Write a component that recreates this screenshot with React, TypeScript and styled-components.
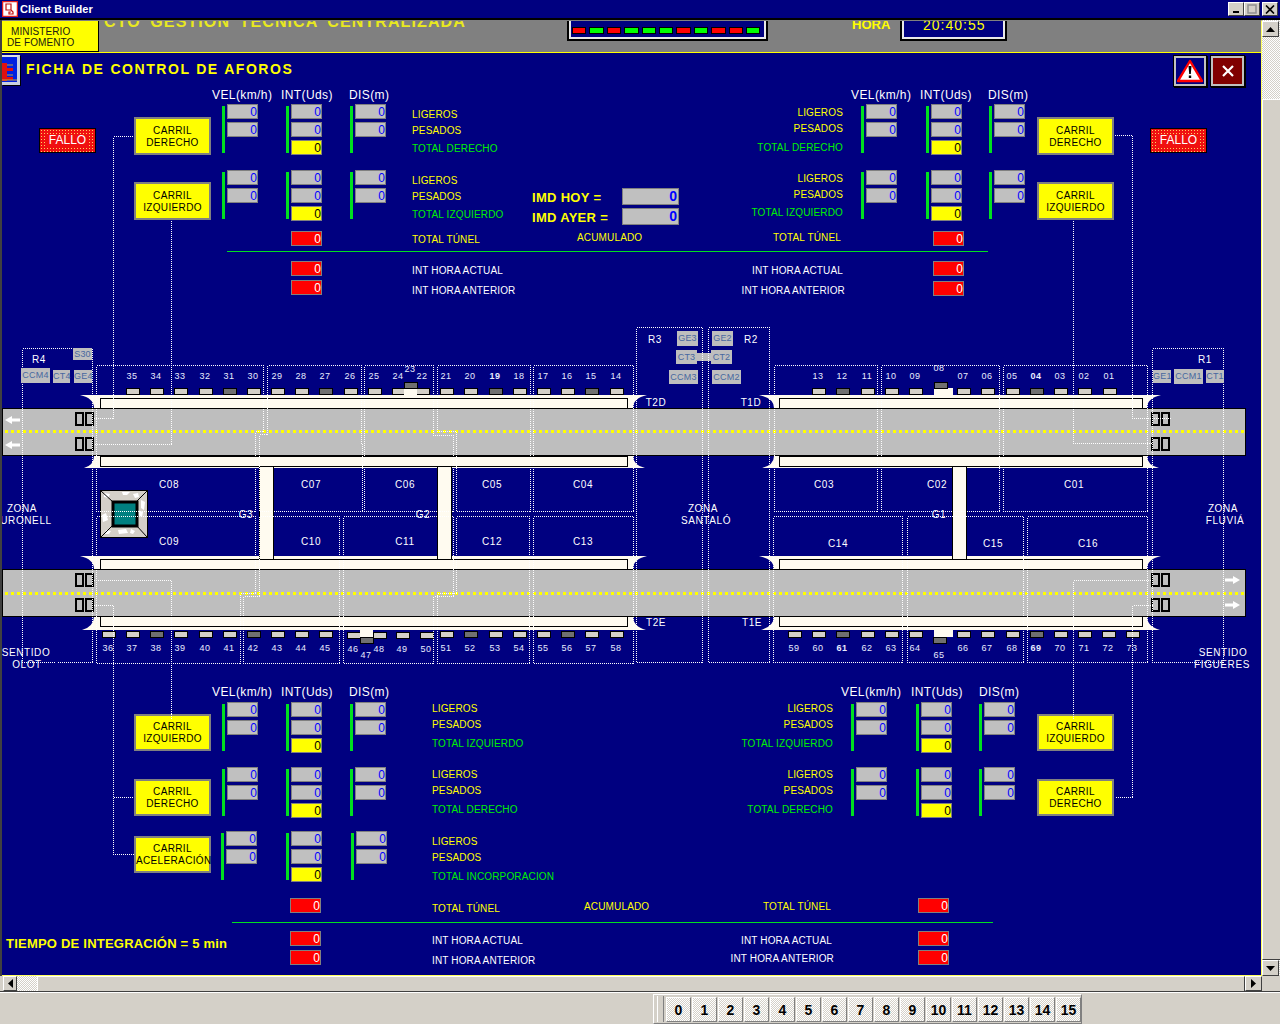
import React from 'react';
import styled, { createGlobalStyle, css } from 'styled-components';

// the synoptic is a free canvas: everything inside it uses page coordinates
const OX = 2;
const OY = 53;

type Pos = { $x: number; $y: number };

const at = css<Pos>`
  position: absolute;
  left: ${(p) => p.$x - OX}px;
  top: ${(p) => p.$y - OY}px;
`;

const NAVY = '#000080';
const FACE = '#d4d0c8';
const CREAM = '#fffbf0';
const GREEN = '#00f000';
const dither = css`
  background-color: ${FACE};
  background-image: conic-gradient(#ffffff 25%, ${FACE} 0 50%, #ffffff 0 75%, ${FACE} 0);
  background-size: 2px 2px;
`;

const GlobalStyle = createGlobalStyle`
  html, body { margin: 0; padding: 0; background: ${FACE}; }
  body { font-family: "Liberation Sans", Arial, sans-serif; overflow: hidden; }
`;

const Shell = styled.div`
  width: 1280px;
  height: 1024px;
  display: flex;
  flex-direction: column;
  background: ${FACE};
  overflow: hidden;
`;

// TITLE BAR
const TitleBar = styled.div`
  height: 18px;
  border-bottom: 2px solid #000000;
  background: ${NAVY};
  display: flex;
  align-items: center;
  padding-left: 2px;
  flex: none;
`;
const TitleText = styled.span`
  margin-left: 2px;
  color: #ffffff;
  font-size: 11px;
  font-weight: bold;
  letter-spacing: 0.1px;
`;
const WindowButtons = styled.div`
  margin-left: auto;
  display: flex;
  padding-right: 2px;
`;
const WindowButton = styled.div<{ $gap?: number }>`
  width: 16px;
  height: 14px;
  margin-left: ${(p) => p.$gap ?? 0}px;
  background: ${FACE};
  border-top: 1px solid #ffffff;
  border-left: 1px solid #ffffff;
  border-right: 1px solid #404040;
  border-bottom: 1px solid #404040;
  box-sizing: border-box;
  display: flex;
  align-items: center;
  justify-content: center;
`;

// WINDOW BODY
const WindowRow = styled.div`
  height: 956px;
  display: flex;
  flex: none;
  border-left: 2px solid #404040;
`;
const Content = styled.div`
  width: 1259px;
  display: flex;
  flex-direction: column;
  border-top: 1px solid #808080;
  border-right: 1px solid #ffff60;
  border-bottom: 1px solid #ffff60;
`;
const Band = styled.div`
  height: 31px;
  flex: none;
  background: #808080;
  border-bottom: 1px solid #ffff00;
  display: flex;
  overflow: hidden;
`;
const Ministry = styled.div`
  width: 97px;
  flex: none;
  background: #ffff00;
  border-right: 1px solid #000000;
  border-bottom: 1px solid #000000;
  color: #202010;
  font-size: 10px;
  line-height: 11px;
  padding: 5px 0 0 5px;
  letter-spacing: 0.1px;
  box-sizing: border-box;
  span { display: block; }
  span:first-child { padding-left: 4px; }
`;
const BandTitle = styled.div`
  flex: 0 0 468px;
  margin-top: -7px;
  padding-left: 5px;
  box-sizing: border-box;
  color: #e8e820;
  font-size: 16px;
  font-weight: bold;
  line-height: 16px;
  letter-spacing: 1.1px;
  word-spacing: 4px;
  white-space: nowrap;
  overflow: hidden;
`;
const Inset = styled.div<{ $w: number }>`
  width: ${(p) => p.$w}px;
  height: 20px;
  flex: none;
  box-sizing: border-box;
  background: ${NAVY};
  border: 2px solid #000000;
  border-top: 0;
  box-shadow: inset 2px -2px 0 #e8e8e8, inset -2px 0 0 #e8e8e8;
`;
const LedRow = styled.div`
  display: flex;
  gap: 3px;
  padding: 6px 0 0 3px;
`;
const Led = styled.i<{ $on: boolean }>`
  display: block;
  width: 14.4px;
  height: 7px;
  border: 1px solid #000000;
  box-sizing: border-box;
  background: ${(p) => (p.$on ? '#00ff00' : '#ff0000')};
`;
const HoraLabel = styled.div`
  width: 48px;
  margin-left: 84px;
  margin-top: -3px;
  flex: none;
  color: #ffff00;
  font-size: 13px;
  font-weight: bold;
  line-height: 14px;
`;
const ClockText = styled.div`
  margin-top: -3px;
  padding-left: 21px;
  color: #ffff00;
  font-size: 14px;
  line-height: 15px;
  letter-spacing: 1px;
`;

const Canvas = styled.div`
  position: relative;
  flex: 1;
  background: ${NAVY};
  overflow: hidden;
`;
const Diagram = styled.svg`
  position: absolute;
  left: 0;
  top: 0;
`;

// CANVAS PARTS
const Heading = styled.div<Pos>`
  ${at};
  color: #ffff00;
  font-size: 14px;
  font-weight: bold;
  line-height: 16px;
  letter-spacing: 1.55px;
  word-spacing: 0.5px;
  white-space: nowrap;
`;
const anchors = { start: 'none', middle: 'translateX(-50%)', end: 'translateX(-100%)' };
const Label = styled.span<Pos & { $tone?: string; $anchor?: keyof typeof anchors; $size?: number; $bold?: boolean; $track?: number }>`
  ${at};
  color: ${(p) => p.$tone ?? '#ffff00'};
  font-size: ${(p) => p.$size ?? 10}px;
  font-weight: ${(p) => (p.$bold ? 'bold' : 'normal')};
  letter-spacing: ${(p) => p.$track ?? 0.15}px;
  line-height: 12px;
  margin-top: -5px;
  white-space: nowrap;
  transform: ${(p) => anchors[p.$anchor ?? 'start']};
`;
const Lane = styled.div<Pos & { $h: number }>`
  ${at};
  width: 77px;
  height: ${(p) => p.$h}px;
  box-sizing: border-box;
  background: #ffff00;
  border: 2px solid #808080;
  color: #000000;
  font-size: 10px;
  line-height: 12px;
  letter-spacing: 0.35px;
  text-align: center;
  display: flex;
  flex-direction: column;
  justify-content: center;
  padding-top: 1px;
  white-space: nowrap;
`;
const Fallo = styled.div<Pos>`
  ${at};
  width: 57px;
  height: 25px;
  box-sizing: border-box;
  background:
    linear-gradient(#f01010, #f01010) center / 42px 13px no-repeat,
    radial-gradient(circle, #ffd060 0.7px, #f01010 0.9px) 0 0 / 3px 3px;
  border: 1px solid #000000;
  color: #ffffff;
  font-size: 12px;
  line-height: 23px;
  text-align: center;
`;
const GaugeGroup = styled.div<Pos>`
  ${at};
  display: flex;
  gap: 2px;
`;
const GaugeBar = styled.i`
  display: block;
  width: 3px;
  height: 47px;
  margin-top: 2px;
  background: #00e020;
`;
const GaugeStack = styled.div`
  display: flex;
  flex-direction: column;
  gap: 3px;
`;
const tones = {
  gray: { bg: '#c0c0c0', fg: '#0000ff' },
  yellow: { bg: '#ffff00', fg: '#000000' },
  red: { bg: '#ff0000', fg: '#ffffff' },
};
const Readout = styled.div<{ $tone?: keyof typeof tones }>`
  width: 31px;
  height: 15px;
  box-sizing: border-box;
  border: 1px solid #808080;
  background: ${(p) => tones[p.$tone ?? 'gray'].bg};
  color: ${(p) => tones[p.$tone ?? 'gray'].fg};
  font-size: 12px;
  line-height: 14px;
  text-align: right;
`;
const PlacedReadout = styled(Readout)<Pos>`
  ${at};
`;
const ImdBox = styled.div<Pos>`
  ${at};
  width: 57px;
  height: 17px;
  box-sizing: border-box;
  background: #c0c0c0;
  border: 1px solid #808080;
  color: #0000ff;
  font-size: 14px;
  font-weight: bold;
  line-height: 15px;
  text-align: right;
  padding-right: 1px;
`;
const Tag = styled.div<Pos & { $w: number; $h: number }>`
  ${at};
  width: ${(p) => p.$w}px;
  height: ${(p) => p.$h}px;
  background: #bebebe;
  color: #4868a0;
  font-size: 9px;
  line-height: ${(p) => p.$h}px;
  letter-spacing: 0.2px;
  text-align: center;
`;
const IconTile = styled.div<Pos & { $w: number; $h: number; $fill: string }>`
  ${at};
  width: ${(p) => p.$w}px;
  height: ${(p) => p.$h}px;
  box-sizing: border-box;
  background: ${(p) => p.$fill};
  border: 3px solid #c0c0c0;
  outline: 1px solid #000000;
  outline-offset: -1px;
  box-shadow: 1px 1px 0 #000000;
  display: flex;
  align-items: center;
  justify-content: center;
`;
const PageIcon = styled.div<Pos>`
  ${at};
  width: 18px;
  height: 30px;
  box-sizing: border-box;
  background: #0020e0;
  border-top: 2px solid #e0e0e0;
  border-right: 3px solid #c8d0e0;
  border-bottom: 3px solid #c8d0e0;
  box-shadow: 1px 1px 0 #000000;
  display: flex;
`;

// SCROLLBARS AND TOOL STRIP
const VScroll = styled.div`
  flex: 1;
  display: flex;
  flex-direction: column;
  padding-top: 1px;
  ${dither};
`;
const ArrowButton = styled.div<{ $w?: number; $h?: number }>`
  width: ${(p) => p.$w ?? 17}px;
  height: ${(p) => p.$h ?? 16}px;
  flex: none;
  box-sizing: border-box;
  background: ${FACE};
  border-top: 1px solid #ffffff;
  border-left: 1px solid #ffffff;
  border-right: 1px solid #404040;
  border-bottom: 1px solid #404040;
  display: flex;
  align-items: center;
  justify-content: center;
`;
const VThumb = styled.div`
  margin-top: 62px;
  flex: 1;
  background: ${FACE};
  border-top: 1px solid #ffffff;
  border-left: 1px solid #ffffff;
  border-bottom: 1px solid #404040;
`;
const HScroll = styled.div`
  height: 15px;
  flex: none;
  margin-left: 3px;
  width: 1259px;
  display: flex;
  ${dither};
`;
const HThumb = styled.div`
  margin-left: 20px;
  flex: 1;
  background: ${FACE};
  border-top: 1px solid #ffffff;
  border-left: 1px solid #ffffff;
  border-right: 1px solid #404040;
`;
const StatusBar = styled.div`
  flex: 1;
  border-top: 1px solid #404040;
  box-shadow: inset 0 1px 0 #ffffff;
  padding: 2px 0 0 653px;
`;
const ToolStrip = styled.div`
  width: 429px;
  height: 30px;
  box-sizing: border-box;
  display: flex;
  align-items: center;
  gap: 1px;
  padding-left: 3px;
  border-top: 1px solid #ffffff;
  border-left: 1px solid #ffffff;
  border-right: 1px solid #808080;
  border-bottom: 1px solid #808080;
`;
const Grip = styled.i`
  display: block;
  width: 5px;
  height: 26px;
  margin-right: 1px;
  background: ${FACE};
  border-left: 1px solid #ffffff;
  border-right: 1px solid #808080;
`;
const ToolButton = styled.div`
  width: 25px;
  height: 25px;
  box-sizing: border-box;
  ${dither};
  border-top: 1px solid #ffffff;
  border-left: 1px solid #ffffff;
  border-right: 1px solid #808080;
  border-bottom: 1px solid #808080;
  color: #000000;
  font-size: 14px;
  font-weight: bold;
  line-height: 25px;
  text-align: center;
`;

// DATA
const topSensors: [string, number][] = [
  ['35', 132], ['34', 156], ['33', 180], ['32', 205], ['31', 229], ['30', 253], ['29', 277], ['28', 301], ['27', 325], ['26', 350],
  ['25', 374], ['24', 398], ['22', 422], ['21', 446], ['20', 470], ['19', 495], ['18', 519], ['17', 543], ['16', 567], ['15', 591], ['14', 616],
  ['13', 818], ['12', 842], ['11', 867], ['10', 891], ['09', 915], ['07', 963], ['06', 987], ['05', 1012], ['04', 1036], ['03', 1060], ['02', 1084], ['01', 1109],
];
const bottomSensors: [string, number][] = [
  ['36', 108], ['37', 132], ['38', 156], ['39', 180], ['40', 205], ['41', 229], ['42', 253], ['43', 277], ['44', 301], ['45', 325],
  ['51', 446], ['52', 470], ['53', 495], ['54', 519], ['55', 543], ['56', 567], ['57', 591], ['58', 616],
  ['59', 794], ['60', 818], ['61', 842], ['62', 867], ['63', 891], ['64', 915], ['66', 963], ['67', 987], ['68', 1012], ['69', 1036], ['70', 1060], ['71', 1084], ['72', 1108], ['73', 1132],
];
const shiftedSensors: [string, number][] = [['46', 353], ['48', 379], ['49', 402], ['50', 426]];
const darkSensors = ['31', '27', '19', '15', '12', '04', '38', '42', '52', '56', '61', '69'];
const boldSensors = ['19', '04', '61', '69'];

const zones = [
  'M22,348H92V662H22Z',
  'M96,365H263V431H255V511H96Z',
  'M267,365V434H259V511H362V443H361V365Z',
  'M364,365H433V435H453V511H364Z',
  'M437,365H530V511H456V431H437Z',
  'M533,365H633V511H533Z',
  'M96,516H255V593H240V663H96Z',
  'M259,516V596H243V663H339V516Z',
  'M343,516H453V596H433V663H343Z',
  'M456,516H529V663H437V593H456Z',
  'M533,516H633V663H533Z',
  'M636,327H702V662H636Z',
  'M708,327H769V662H708Z',
  'M774,365H877V511H774Z',
  'M881,365H999V511H881Z',
  'M1003,365H1147V511H1003Z',
  'M773,516H902V662H773Z',
  'M907,516H1023V662H907Z',
  'M1027,516H1147V662H1027Z',
  'M1152,348H1223V662H1152Z',
  'M134,136H113V418H93',
  'M171,220V444H93',
  'M1114,135H1132V418H1170',
  'M1073,220V443H1152',
  'M93,580H171V720',
  'M93,605H113V854H134',
  'M113,797H134',
  'M1152,580H1073V720',
  'M1152,605H1132V797H1114',
];

const walls = [
  [100, 627, 395, 398, 408, 80, 647, 94, 633],
  [100, 627, 468, 466, 456, 84, 645, 94, 633],
  [100, 627, 556, 559, 569, 80, 647, 94, 633],
  [100, 627, 630, 626, 616, 82, 646, 94, 633],
  [779, 1142, 395, 398, 408, 759, 1161, 774, 1147],
  [779, 1142, 468, 466, 456, 762, 1159, 774, 1147],
  [779, 1142, 556, 559, 569, 759, 1161, 774, 1147],
  [779, 1142, 630, 626, 616, 761, 1160, 774, 1147],
];

const blotches = [
  'M104,493l6,1-2,4-4,-1Z', 'M122,492l8,0-3,3-4,0Z', 'M133,494l5,-1 1,4-4,1Z', 'M141,500l4,2-1,8-3,-2Z',
  'M137,510l6,2-1,5-4,-2Z', 'M102,515l4,-2 2,7-5,2Z', 'M118,530l8,-1 2,4-9,1Z', 'M131,529l4,2-2,3-3,-1Z', 'M106,530l5,1-2,3-4,0Z',
];

const Gauge = ({ x, y, total }: { x: number; y: number; total?: boolean }) => (
  <GaugeGroup $x={x} $y={y}>
    <GaugeBar />
    <GaugeStack>
      <Readout>0</Readout>
      <Readout>0</Readout>
      {total && <Readout $tone="yellow">0</Readout>}
    </GaugeStack>
  </GaugeGroup>
);

const GaugeTrio = ({ xs, y }: { xs: number[]; y: number }) => (
  <>
    <Gauge x={xs[0]} y={y} />
    <Gauge x={xs[1]} y={y} total />
    <Gauge x={xs[2]} y={y} />
  </>
);

const Headers = ({ xs, y }: { xs: number[]; y: number }) => (
  <>
    <Label $x={xs[0]} $y={y} $tone="#ffffff" $size={12} $track={0.4}>VEL(km/h)</Label>
    <Label $x={xs[1]} $y={y} $tone="#ffffff" $size={12} $track={0.4}>INT(Uds)</Label>
    <Label $x={xs[2]} $y={y} $tone="#ffffff" $size={12} $track={0.4}>DIS(m)</Label>
  </>
);

const CarrilButton = ({ x, y, h, name }: { x: number; y: number; h: number; name: string }) => (
  <Lane $x={x} $y={y} $h={h}>
    <span>CARRIL</span>
    <span>{name}</span>
  </Lane>
);

const Row = ({ x, ys, names, greens, anchor }: { x: number; ys: number[]; names: string[]; greens: number[]; anchor?: 'end' }) => (
  <>
    {names.map((name, i) => (
      <Label key={name} $x={x} $y={ys[i]} $anchor={anchor} $tone={greens.includes(i) ? GREEN : '#ffff00'}>{name}</Label>
    ))}
  </>
);

const Road = ({ y, mid }: { y: number; mid: number }) => (
  <>
    <rect x={2} y={y} width={1243} height={47} fill="#bebebe" stroke="#000000" />
    <line x1={5} x2={1244} y1={mid} y2={mid} stroke="#ffff00" strokeWidth={3} strokeDasharray="3 3" />
  </>
);

const SensorPair = ({ x, y }: { x: number; y: number }) => (
  <>
    <rect x={x} y={y} width={7} height={12} fill="none" stroke="#000000" strokeWidth={1.4} />
    <rect x={x + 10} y={y} width={7} height={12} fill="none" stroke="#000000" strokeWidth={1.4} />
  </>
);

const Pad = ({ cx, y, dark }: { cx: number; y: number; dark?: boolean }) => (
  <rect x={cx - 6.5} y={y} width={13} height={6} fill={dark ? '#707070' : FACE} stroke="#000000" />
);

const App = () => {
  const leds = [false, true, false, true, true, true, false, true, false, false, true];
  return (
    <>
      <GlobalStyle />
      <Shell>
        {/* TITLE BAR */}
        <TitleBar>
          <svg width="16" height="16" viewBox="0 0 16 16">
            <rect x="0.5" y="0.5" width="15" height="15" fill="#ffffff" stroke="#e02020" strokeWidth="1.5" />
            <path d="M4 3h5v6H4z M9 9l2 2v2H7v-2h2" fill="none" stroke="#c01010" strokeWidth="1.2" />
          </svg>
          <TitleText>Client Builder</TitleText>
          <WindowButtons>
            <WindowButton>
              <svg width="8" height="8"><rect x="1" y="6" width="6" height="2" fill="#000" /></svg>
            </WindowButton>
            <WindowButton>
              <svg width="10" height="10"><rect x="1" y="1" width="8" height="8" fill="none" stroke="#909090" strokeWidth="1.5" /></svg>
            </WindowButton>
            <WindowButton $gap={2}>
              <svg width="10" height="9"><path d="M1 0.5l8 8M9 0.5l-8 8" stroke="#000" strokeWidth="1.6" /></svg>
            </WindowButton>
          </WindowButtons>
        </TitleBar>

        <WindowRow>
          <Content>
            {/* HEADER BAND */}
            <Band>
              <Ministry>
                <span>MINISTERIO</span>
                <span>DE FOMENTO</span>
              </Ministry>
              <BandTitle>CTO GESTIÓN TÉCNICA CENTRALIZADA</BandTitle>
              <Inset $w={201}>
                <LedRow>
                  {leds.map((on, i) => <Led key={i} $on={on} />)}
                </LedRow>
              </Inset>
              <HoraLabel>HORA</HoraLabel>
              <Inset $w={107}>
                <ClockText>20:40:55</ClockText>
              </Inset>
            </Band>

            {/* SYNOPTIC */}
            <Canvas>
              <Diagram width="1258" height="922" viewBox="2 53 1258 922">
                <g shapeRendering="crispEdges">
                  {walls.map(([x1, x2, outer, inner, road, lf, rf, ln, rn]) => {
                    const bend = outer + (road - outer) * 0.25;
                    return (
                      <g key={`${x1}-${outer}`}>
                        <path d={`M${lf},${outer}H${rf}Q${rn},${bend} ${rn},${road}H${ln}Q${ln},${bend} ${lf},${outer}Z`} fill={CREAM} shapeRendering="auto" />
                        <rect x={x1 + 0.5} y={Math.min(inner, road) + 0.5} width={x2 - x1} height={Math.abs(road - inner)} fill={CREAM} stroke="#000000" />
                      </g>
                    );
                  })}
                  <rect x={259} y={466} width={14} height={93} fill={CREAM} stroke="#000000" />
                  <rect x={437} y={466} width={14} height={93} fill={CREAM} stroke="#000000" />
                  <rect x={952} y={466} width={14} height={93} fill={CREAM} stroke="#000000" />

                  <Road y={408} mid={431} />
                  <Road y={569} mid={593} />

                  {[[76, 413], [76, 438], [76, 574], [76, 599], [1152, 413], [1152, 438], [1152, 574], [1152, 599]].map(([x, y]) => (
                    <SensorPair key={`${x}-${y}`} x={x} y={y} />
                  ))}

                  {topSensors.map(([id, cx]) => <Pad key={id} cx={cx + 0.5} y={388} dark={darkSensors.includes(id)} />)}
                  {bottomSensors.map(([id, cx]) => <Pad key={id} cx={cx + 0.5} y={631} dark={darkSensors.includes(id)} />)}
                  {shiftedSensors.map(([id, cx]) => <Pad key={id} cx={cx + 0.5} y={632} />)}

                  {/* SENSORS WITH A NOTCH IN THE WALL */}
                  <rect x={404} y={388} width={13} height={7} fill={CREAM} />
                  <Pad cx={410.5} y={382} dark />
                  <rect x={934} y={388} width={19} height={7} fill={CREAM} />
                  <Pad cx={940.5} y={382} dark />
                  <rect x={360} y={630} width={13} height={7} fill={CREAM} />
                  <Pad cx={366.5} y={637} dark />
                  <rect x={934} y={630} width={19} height={7} fill={CREAM} />
                  <Pad cx={940} y={637} dark />

                  {/* LINK BETWEEN CT3 AND CT2 */}
                  <rect x={697} y={353} width={14} height={8} fill="#bebebe" />

                  {/* FAN */}
                  <rect x={100.5} y={490.5} width={47} height={47} fill={FACE} stroke="#000000" />
                </g>
                {blotches.map((d) => <path key={d} d={d} fill="#ffffff" />)}
                <path d="M101,491L113,502M147,491L136,502M101,537L113,525M147,537L136,525" stroke="#000000" />
                <rect x={113} y={502} width={24} height={24} fill="#008080" stroke="#000000" strokeWidth={3} />

                {/* DIRECTION ARROWS */}
                <path d="M5,420l7,-4v2.5h8v3h-8v2.5Z M5,445l7,-4v2.5h8v3h-8v2.5Z" fill="#ffffff" />
                <path d="M1240,580l-7,-4v2.5h-8v3h8v2.5Z M1240,605l-7,-4v2.5h-8v3h8v2.5Z" fill="#ffffff" />

                {/* DOTTED ZONES AND WIRING */}
                <g fill="none" stroke="#ffffff" strokeDasharray="1 1" transform="translate(0.5 0.5)" shapeRendering="crispEdges">
                  {zones.map((d) => <path key={d} d={d} />)}
                </g>

                <path d="M227,251.5H988M232,922.5H993" stroke="#00e020" shapeRendering="crispEdges" />
              </Diagram>

              <PageIcon $x={2} $y={55}>
                <svg width="15" height="25" viewBox="0 0 15 25">
                  <path d="M0 6h5v5h6v3h-6v2h-5z M0 15h5v5h6v3h-6v1h-5z" fill="#e01010" />
                  <path d="M5 8h6M5 18h6M0 23h15" stroke="#c0a040" strokeWidth="1" />
                </svg>
              </PageIcon>
              <Heading $x={26} $y={61}>FICHA DE CONTROL DE AFOROS</Heading>
              <IconTile $x={1173} $y={55} $w={34} $h={32} $fill={NAVY}>
                <svg width="26" height="24" viewBox="0 0 26 24">
                  <path d="M13 2L25 22H1Z" fill="#ffffff" stroke="#ff0000" strokeWidth="2.4" strokeLinejoin="round" />
                  <path d="M11.5 7h3l-.7 8h-1.6zM11.8 16.5h2.4v2.5h-2.4z" fill="#000000" />
                </svg>
              </IconTile>
              <IconTile $x={1210} $y={55} $w={35} $h={32} $fill="#800000">
                <svg width="14" height="14" viewBox="0 0 14 14">
                  <path d="M2 2L12 12M12 2L2 12" stroke="#ffffff" strokeWidth="2.2" />
                </svg>
              </IconTile>

              {/* TOP LEFT */}
              <Headers xs={[212, 281, 349]} y={94} />
              <Fallo $x={39} $y={128}>FALLO</Fallo>
              <CarrilButton x={134} y={117} h={38} name="DERECHO" />
              <CarrilButton x={134} y={182} h={38} name="IZQUIERDO" />
              <GaugeTrio xs={[222, 286, 350]} y={104} />
              <GaugeTrio xs={[222, 286, 350]} y={170} />
              <Row x={412} ys={[114, 130, 148]} names={['LIGEROS', 'PESADOS', 'TOTAL DERECHO']} greens={[2]} />
              <Row x={412} ys={[180, 196, 214]} names={['LIGEROS', 'PESADOS', 'TOTAL IZQUIERDO']} greens={[2]} />
              <Label $x={412} $y={239}>TOTAL TÚNEL</Label>
              <Label $x={412} $y={270} $tone="#ffffff">INT HORA ACTUAL</Label>
              <Label $x={412} $y={290} $tone="#ffffff">INT HORA ANTERIOR</Label>
              <PlacedReadout $x={291} $y={231} $tone="red">0</PlacedReadout>
              <PlacedReadout $x={291} $y={261} $tone="red">0</PlacedReadout>
              <PlacedReadout $x={291} $y={280} $tone="red">0</PlacedReadout>

              {/* IMD */}
              <Label $x={532} $y={197} $size={13} $bold $track={0.3}>IMD HOY =</Label>
              <Label $x={532} $y={217} $size={13} $bold $track={0.3}>IMD AYER =</Label>
              <ImdBox $x={622} $y={188}>0</ImdBox>
              <ImdBox $x={622} $y={208}>0</ImdBox>
              <Label $x={577} $y={237}>ACUMULADO</Label>

              {/* TOP RIGHT */}
              <Headers xs={[851, 920, 988]} y={94} />
              <Fallo $x={1150} $y={128}>FALLO</Fallo>
              <CarrilButton x={1037} y={117} h={38} name="DERECHO" />
              <CarrilButton x={1037} y={182} h={38} name="IZQUIERDO" />
              <GaugeTrio xs={[861, 926, 989]} y={104} />
              <GaugeTrio xs={[861, 926, 989]} y={170} />
              <Row x={843} ys={[112, 128, 147]} names={['LIGEROS', 'PESADOS', 'TOTAL DERECHO']} greens={[2]} anchor="end" />
              <Row x={843} ys={[178, 194, 212]} names={['LIGEROS', 'PESADOS', 'TOTAL IZQUIERDO']} greens={[2]} anchor="end" />
              <Label $x={841} $y={237} $anchor="end">TOTAL TÚNEL</Label>
              <Label $x={843} $y={270} $anchor="end" $tone="#ffffff">INT HORA ACTUAL</Label>
              <Label $x={845} $y={290} $anchor="end" $tone="#ffffff">INT HORA ANTERIOR</Label>
              <PlacedReadout $x={933} $y={231} $tone="red">0</PlacedReadout>
              <PlacedReadout $x={933} $y={261} $tone="red">0</PlacedReadout>
              <PlacedReadout $x={933} $y={281} $tone="red">0</PlacedReadout>

              {/* ZONE AND CELL NAMES */}
              {[['C08', 169, 484], ['C07', 311, 484], ['C06', 405, 484], ['C05', 492, 484], ['C04', 583, 484], ['C03', 824, 484], ['C02', 937, 484], ['C01', 1074, 484],
                ['C09', 169, 541], ['C10', 311, 541], ['C11', 405, 541], ['C12', 492, 541], ['C13', 583, 541], ['C14', 838, 543], ['C15', 993, 543], ['C16', 1088, 543],
                ['G3', 246, 514], ['G2', 423, 514], ['G1', 939, 514], ['T2D', 656, 402], ['T1D', 751, 402], ['T2E', 656, 622], ['T1E', 752, 622],
                ['R4', 39, 359], ['R3', 655, 339], ['R2', 751, 339], ['R1', 1205, 359],
                ['ZONA', 22, 508], ['URONELL', 26, 520], ['ZONA', 703, 508], ['SANTALÓ', 706, 520], ['ZONA', 1223, 508], ['FLUVIÁ', 1225, 520],
                ['SENTIDO', 26, 652], ['OLOT', 27, 664], ['SENTIDO', 1223, 652], ['FIGUERES', 1222, 664]].map(([name, x, y]) => (
                <Label key={`${name}-${x}`} $x={x as number} $y={y as number} $anchor="middle" $tone="#ffffff" $track={0.6}>{name}</Label>
              ))}

              {/* REGULATOR TAGS */}
              <Tag $x={73} $y={348} $w={19} $h={12}>S30</Tag>
              <Tag $x={21} $y={368} $w={29} $h={15}>CCM4</Tag>
              <Tag $x={53} $y={370} $w={17} $h={13}>CT4</Tag>
              <Tag $x={74} $y={370} $w={18} $h={13}>GE4</Tag>
              <Tag $x={677} $y={331} $w={21} $h={15}>GE3</Tag>
              <Tag $x={676} $y={350} $w={21} $h={14}>CT3</Tag>
              <Tag $x={669} $y={370} $w={29} $h={14}>CCM3</Tag>
              <Tag $x={712} $y={331} $w={21} $h={15}>GE2</Tag>
              <Tag $x={711} $y={350} $w={21} $h={14}>CT2</Tag>
              <Tag $x={712} $y={370} $w={29} $h={14}>CCM2</Tag>
              <Tag $x={1153} $y={370} $w={18} $h={13}>GE1</Tag>
              <Tag $x={1174} $y={369} $w={29} $h={15}>CCM1</Tag>
              <Tag $x={1206} $y={370} $w={18} $h={13}>CT1</Tag>

              {/* SENSOR NUMBERS */}
              {topSensors.map(([id, cx]) => (
                <Label key={id} $x={cx} $y={375} $anchor="middle" $tone="#e8ecff" $size={9} $track={0.6} $bold={boldSensors.includes(id)}>{id}</Label>
              ))}
              {bottomSensors.map(([id, cx]) => (
                <Label key={id} $x={cx} $y={647} $anchor="middle" $tone="#e8ecff" $size={9} $track={0.6} $bold={boldSensors.includes(id)}>{id}</Label>
              ))}
              {shiftedSensors.map(([id, cx]) => (
                <Label key={id} $x={cx} $y={648} $anchor="middle" $tone="#e8ecff" $size={9} $track={0.6}>{id}</Label>
              ))}
              <Label $x={410} $y={368} $anchor="middle" $tone="#e8ecff" $size={9} $track={0.6}>23</Label>
              <Label $x={939} $y={367} $anchor="middle" $tone="#e8ecff" $size={9} $track={0.6}>08</Label>
              <Label $x={366} $y={654} $anchor="middle" $tone="#e8ecff" $size={9} $track={0.6}>47</Label>
              <Label $x={939} $y={654} $anchor="middle" $tone="#e8ecff" $size={9} $track={0.6}>65</Label>

              {/* BOTTOM LEFT */}
              <Headers xs={[212, 281, 349]} y={691} />
              <CarrilButton x={134} y={714} h={37} name="IZQUIERDO" />
              <CarrilButton x={134} y={779} h={37} name="DERECHO" />
              <CarrilButton x={134} y={836} h={37} name="ACELERACIÓN" />
              <GaugeTrio xs={[222, 286, 350]} y={702} />
              <GaugeTrio xs={[222, 286, 350]} y={767} />
              <GaugeTrio xs={[221, 286, 351]} y={831} />
              <Row x={432} ys={[708, 724, 743]} names={['LIGEROS', 'PESADOS', 'TOTAL IZQUIERDO']} greens={[2]} />
              <Row x={432} ys={[774, 790, 809]} names={['LIGEROS', 'PESADOS', 'TOTAL DERECHO']} greens={[2]} />
              <Row x={432} ys={[841, 857, 876]} names={['LIGEROS', 'PESADOS', 'TOTAL INCORPORACION']} greens={[2]} />
              <Label $x={432} $y={908}>TOTAL TÚNEL</Label>
              <Label $x={432} $y={940} $tone="#ffffff">INT HORA ACTUAL</Label>
              <Label $x={432} $y={960} $tone="#ffffff">INT HORA ANTERIOR</Label>
              <Label $x={584} $y={906}>ACUMULADO</Label>
              <PlacedReadout $x={290} $y={898} $tone="red">0</PlacedReadout>
              <PlacedReadout $x={290} $y={931} $tone="red">0</PlacedReadout>
              <PlacedReadout $x={290} $y={950} $tone="red">0</PlacedReadout>
              <Label $x={6} $y={943} $size={13} $bold $track={0.22}>TIEMPO DE INTEGRACIÓN = 5 min</Label>

              {/* BOTTOM RIGHT */}
              <Headers xs={[841, 911, 979]} y={691} />
              <CarrilButton x={1037} y={714} h={37} name="IZQUIERDO" />
              <CarrilButton x={1037} y={779} h={37} name="DERECHO" />
              <GaugeTrio xs={[851, 916, 979]} y={702} />
              <GaugeTrio xs={[851, 916, 979]} y={767} />
              <Row x={833} ys={[708, 724, 743]} names={['LIGEROS', 'PESADOS', 'TOTAL IZQUIERDO']} greens={[2]} anchor="end" />
              <Row x={833} ys={[774, 790, 809]} names={['LIGEROS', 'PESADOS', 'TOTAL DERECHO']} greens={[2]} anchor="end" />
              <Label $x={831} $y={906} $anchor="end">TOTAL TÚNEL</Label>
              <Label $x={832} $y={940} $anchor="end" $tone="#ffffff">INT HORA ACTUAL</Label>
              <Label $x={834} $y={958} $anchor="end" $tone="#ffffff">INT HORA ANTERIOR</Label>
              <PlacedReadout $x={918} $y={898} $tone="red">0</PlacedReadout>
              <PlacedReadout $x={918} $y={931} $tone="red">0</PlacedReadout>
              <PlacedReadout $x={918} $y={950} $tone="red">0</PlacedReadout>

              {/* WIRE TAILS DRAWN OVER THE LOWER BUTTONS */}
              <Diagram width="1258" height="922" viewBox="2 53 1258 922">
                <path d="M171.5,714V720M1073.5,714V720" stroke="#ffffff" strokeDasharray="1 1" shapeRendering="crispEdges" />
              </Diagram>
            </Canvas>
          </Content>

          <VScroll>
            <ArrowButton>
              <svg width="9" height="5"><path d="M4.5 0L9 5H0Z" fill="#000" /></svg>
            </ArrowButton>
            <VThumb />
            <ArrowButton>
              <svg width="9" height="5"><path d="M4.5 5L9 0H0Z" fill="#000" /></svg>
            </ArrowButton>
          </VScroll>
        </WindowRow>

        <HScroll>
          <ArrowButton $w={14} $h={15}>
            <svg width="5" height="9"><path d="M0 4.5L5 0V9Z" fill="#000" /></svg>
          </ArrowButton>
          <HThumb />
          <ArrowButton $w={17} $h={15}>
            <svg width="5" height="9"><path d="M5 4.5L0 0V9Z" fill="#000" /></svg>
          </ArrowButton>
        </HScroll>

        <StatusBar>
          <ToolStrip>
            <Grip />
            {Array.from({ length: 16 }, (_, i) => <ToolButton key={i}>{i}</ToolButton>)}
          </ToolStrip>
        </StatusBar>
      </Shell>
    </>
  );
};

export default App;
